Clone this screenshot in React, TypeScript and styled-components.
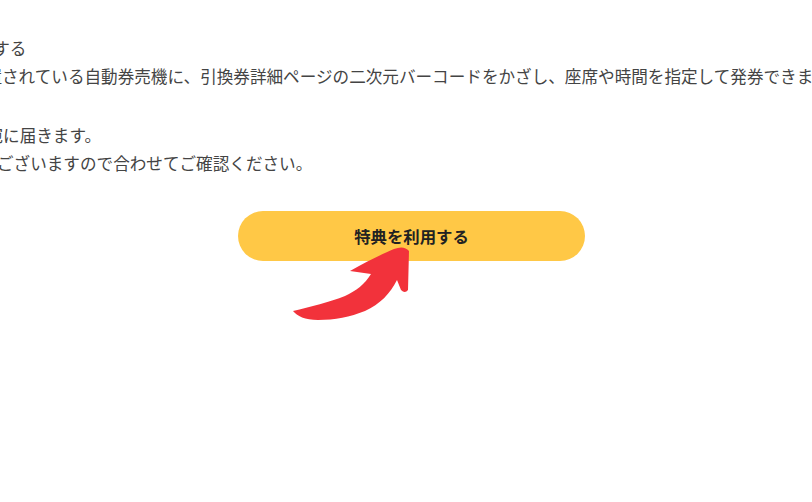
import React from "react";
import styled, { createGlobalStyle } from "styled-components";

const Global = createGlobalStyle`
  html, body {
    margin: 0;
    padding: 0;
    background: #ffffff;
    overflow: hidden;
  }
  body {
    font-family: "Noto Sans CJK JP", "Noto Sans", sans-serif;
  }
`;

const Page = styled.div`
  position: relative;
  width: 812px;
  height: 502px;
  overflow: hidden;
  padding-top: 34px;
  box-sizing: border-box;
`;

const Paragraph = styled.div<{ $gap: number }>`
  display: flex;
  flex-direction: column;
  margin-bottom: ${(p) => p.$gap}px;
`;

const Line = styled.div<{ $shift: number }>`
  margin-left: ${(p) => p.$shift}px;
  white-space: nowrap;
  font-size: 16.6px;
  line-height: 28px;
  color: #444444;
`;

const ButtonRow = styled.div`
  display: flex;
  padding-left: 238px;
`;

const UseButton = styled.button`
  width: 347px;
  height: 50px;
  border: none;
  border-radius: 25px;
  background: #ffc846;
  color: #222222;
  font-family: "Noto Sans CJK JP", "Noto Sans", sans-serif;
  font-size: 16.4px;
  font-weight: 700;
  display: flex;
  align-items: center;
  justify-content: center;
  padding: 0;
  cursor: pointer;
`;

const ArrowLayer = styled.svg`
  position: absolute;
  left: 0;
  top: 0;
  pointer-events: none;
`;

export default function App() {
  return (
    <>
      <Global />
      <Page>
        <Paragraph $gap={31}>
          <Line $shift={-40}>発券する</Line>
          <Line $shift={-14.6}>
            置されている自動券売機に、引換券詳細ページの二次元バーコードをかざし、座席や時間を指定して発券できます。
          </Line>
        </Paragraph>
        <Paragraph $gap={34}>
          <Line $shift={-13.5}>宛に届きます。</Line>
          <Line $shift={-3}>ございますので合わせてご確認ください。</Line>
        </Paragraph>
        <ButtonRow>
          <UseButton>特典を利用する</UseButton>
        </ButtonRow>
        <ArrowLayer width="812" height="502" viewBox="0 0 812 502">
          <path
            d="M 293 311
               C 310 307, 330 302, 345 296
               C 356 291, 365 284, 371 274
               L 350 271
               C 366 262, 382 254, 394 249
               Q 404 245, 409 251
               L 408 290
               Q 405 294, 401 290
               L 397 280
               C 390 294, 380 304, 365 311
               C 350 317, 335 320, 318 320
               C 305 320, 297 316, 293 311 Z"
            fill="#f2323b"
          />
        </ArrowLayer>
      </Page>
    </>
  );
}
